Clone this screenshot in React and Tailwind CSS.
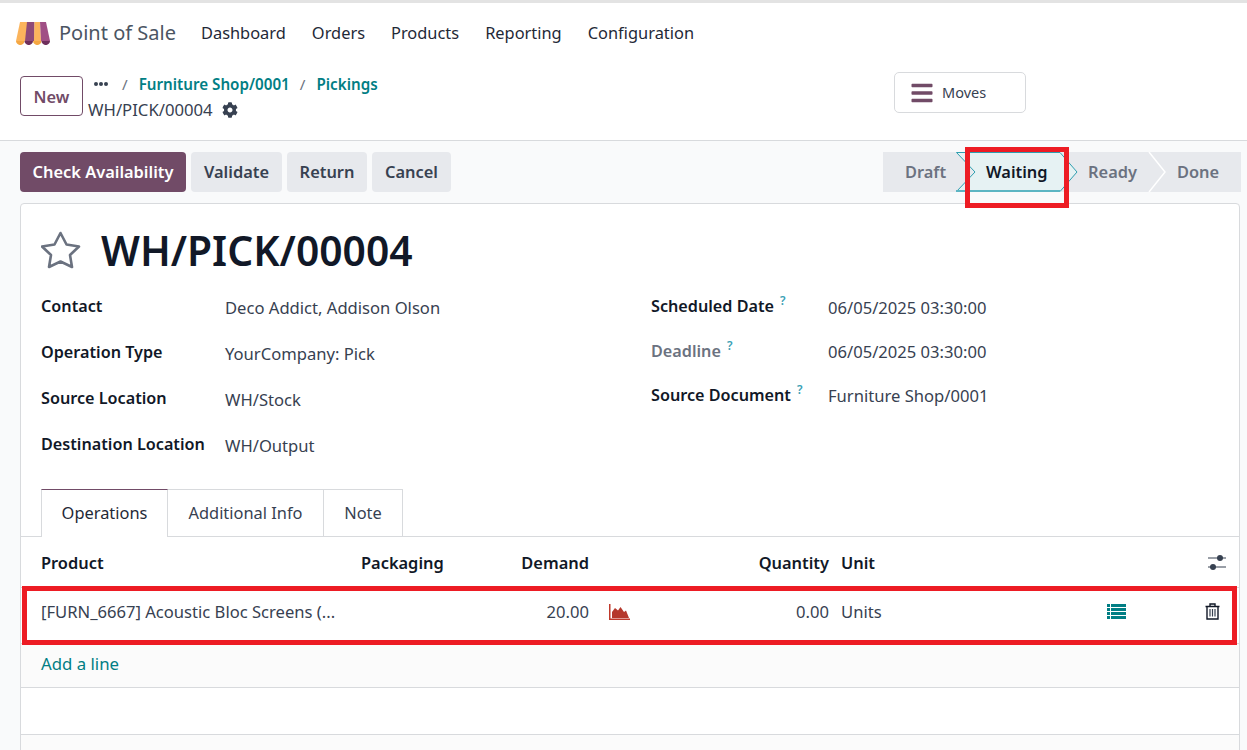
import React from "react";
import { FaCog, FaBars } from "react-icons/fa";

const navItems = ["Dashboard", "Orders", "Products", "Reporting", "Configuration"];

const Logo = () => (
  <svg width="34" height="24" viewBox="0 0 34 24" className="block">
    <path d="M4 1h7v19H0z" fill="#fbb45c" />
    <path d="M11 1h7.500v19H9z" fill="#8f4a78" />
    <path d="M18.500 1H24l1 19h-7z" fill="#fbb45c" />
    <path d="M24 1h6l4 19h-9z" fill="#a04f85" />
    <path d="M0 20h8.500a4.200 4 0 0 1-8.500 0z" fill="#f5a742" />
    <path d="M8.500 20H17a4.200 4 0 0 1-8.500 0z" fill="#6f2f5c" />
    <path d="M17 20h8.500a4.200 4 0 0 1-8.500 0z" fill="#f5a742" />
    <path d="M25.500 20H34a4.200 4 0 0 1-8.500 0z" fill="#6f2f5c" />
  </svg>
);

const StarIcon = () => (
  <svg width="40" height="38" viewBox="0 0 40 38" className="block">
    <path
      d="M19.500 2L25.500 13.500 38 15.500 29 24 31 36 19.500 30.500 8 36 10 24 1 15.500 13.500 13.500z"
      fill="none"
      stroke="#6b7280"
      strokeWidth="2.600"
      strokeLinejoin="round"
    />
  </svg>
);

const ListIcon = () => (
  <svg width="19" height="15" viewBox="0 0 19 15" className="ml-auto mr-[73px] block">
    {[0, 4, 8, 12].map((y) => (
      <g key={y} fill="#017e84">
        <rect x="0" y={y} width="3" height="3" />
        <rect x="4" y={y} width="15" height="3" />
      </g>
    ))}
  </svg>
);

const ChartIcon = () => (
  <svg width="21" height="16" viewBox="0 0 21 16" className="absolute left-[20px] top-[4px] block">
    <path d="M0.750 0v15.250H21" fill="none" stroke="#c0392b" strokeWidth="1.500" />
    <path d="M3 14V8l3-4 3 2.500L11.500 3 15 8l2-1.500 3 7.500z" fill="#b5382c" />
  </svg>
);

const TrashIcon = () => (
  <svg width="15" height="17" viewBox="0 0 15 17" className="ml-[6px] block">
    <path d="M0.500 3.500h14M5 3.500V1h5v2.500M2 3.500V16h11V3.500" fill="none" stroke="#111827" strokeWidth="1.400" />
    <path d="M5 6v7.500M7.500 6v7.500M10 6v7.500" fill="none" stroke="#374151" strokeWidth="1.200" />
  </svg>
);

const Field = ({ label, value, muted, help, tight, width = "w-[184px]" }) => (
  <div className="flex h-[46px] items-start">
    <div className={`${width} flex items-start text-[16.200px] font-semibold ${muted ? "text-[#6b7280]" : "text-[#111827]"}`}>
      {label}
      {help && <sup className="ml-[6px] mt-[7px] text-[12px] font-semibold leading-none text-[#3aa0b5]">?</sup>}
    </div>
    <div className={`${tight ? "pt-[1px]" : "pt-[2px]"} text-[16.600px] text-[#374151]`}>{value}</div>
  </div>
);

const StatusBar = () => (
  <div className="flex h-[40px] w-[358px] items-center bg-[#e7e9ed] text-[#6b7280] font-semibold">
    <div className="w-[78px] pl-[22px]">Draft</div>
    <div className="relative flex h-[40px] w-[106px] items-center pl-[25px] text-[#111827]">
      <svg width="122" height="40" viewBox="0 0 122 40" className="absolute left-[-5px] top-0">
        <path d="M0.500 0.500H104L121 20 104 39.500H0.500L19 20z" fill="#e6f2f3" stroke="#2f9fb0" />
        <path d="M0 39h104" stroke="#5cb5c3" strokeWidth="2" />
      </svg>
      <span className="relative">Waiting</span>
    </div>
    <div className="relative flex h-[40px] w-[82px] items-center pl-[21px]">
      Ready
      <svg width="18" height="40" viewBox="0 0 18 40" className="absolute right-[-17px] top-0">
        <path d="M1 0l16 20L1 40" fill="none" stroke="#ffffff" strokeWidth="1.500" />
      </svg>
    </div>
    <div className="flex-1 pl-[28px]">Done</div>
  </div>
);

const App = () => {
  return (
    <div className="relative h-[750px] w-[1247px] overflow-hidden bg-[#f9fafb] font-['Noto_Sans',sans-serif] text-[16.400px] leading-[24px] text-[#374151]">
      <div className="h-[3px] bg-[#e3e3e3]" />
      <nav className="flex h-[63px] items-center bg-white pl-[16px] pb-[3px]">
        <Logo />
        <span className="ml-[9px] text-[20px] text-[#4b5563]">Point of Sale</span>
        <div className="ml-[25px] flex gap-[26px] text-[#1f2937]">
          {navItems.map((item) => (
            <span key={item}>{item}</span>
          ))}
        </div>
      </nav>

      <div className="relative flex h-[75px] border-b border-[#d8dadd] bg-white pl-[20px] pt-[10px]">
        <button className="h-[40px] w-[63px] rounded-[4px] border border-[#714b67] pt-[1px] font-semibold text-[#714b67]">New</button>
        <div className="ml-[5px] -mt-[6px]">
          <div className="flex h-[28px] items-center text-[15.200px] font-semibold">
            <span className="ml-[6px] flex gap-[1px]">
              <i className="h-[4px] w-[4px] rounded-full bg-[#374151]" />
              <i className="h-[4px] w-[4px] rounded-full bg-[#374151]" />
              <i className="h-[4px] w-[4px] rounded-full bg-[#374151]" />
            </span>
            <span className="ml-[14px] font-normal text-[#6b7280]">/</span>
            <span className="ml-[11px] text-[#017e84]">Furniture Shop/0001</span>
            <span className="ml-[10px] font-normal text-[#6b7280]">/</span>
            <span className="ml-[11px] text-[#017e84]">Pickings</span>
          </div>
          <div className="flex items-center text-[16.700px]">
            <span>WH/PICK/00004</span>
            <FaCog className="ml-[9px] text-[16px] text-[#374151]" />
          </div>
        </div>
        <button className="absolute left-[894px] top-[6px] flex h-[41px] w-[132px] items-center rounded-[5px] border border-[#d8dadd] bg-white pl-[15px] text-[14.500px]">
          <FaBars className="text-[24px] text-[#714b67]" />
          <span className="ml-[8px] pb-[1px]">Moves</span>
        </button>
      </div>

      <div className="flex h-[62px] items-start justify-between pl-[20px] pr-[6px] pt-[11px]">
        <div className="flex gap-[5px] font-semibold">
          <button className="h-[40px] w-[166px] rounded-[4px] bg-[#714b67] text-white">Check Availability</button>
          <button className="h-[40px] w-[91px] rounded-[4px] bg-[#e7e9ed] text-[#374151]">Validate</button>
          <button className="h-[40px] w-[80px] rounded-[4px] bg-[#e7e9ed] text-[#374151]">Return</button>
          <button className="h-[40px] w-[79px] rounded-[4px] bg-[#e7e9ed] text-[#374151]">Cancel</button>
        </div>
        <StatusBar />
      </div>

      <div className="ml-[20px] h-[560px] w-[1220px] rounded-t-[4px] border border-[#d8dadd] bg-white">
        <div className="flex h-[89px] items-center pl-[20px] pt-[3px]">
          <StarIcon />
          <h1 className="ml-[20px] text-[40.800px] font-semibold leading-none text-[#111827]">WH/PICK/00004</h1>
        </div>
        <div className="flex pl-[20px] pt-[1px]">
          <div className="w-[610px]">
            <Field label="Contact" value="Deco Addict, Addison Olson" />
            <Field label="Operation Type" value="YourCompany: Pick" />
            <Field label="Source Location" value="WH/Stock" />
            <Field label="Destination Location" value="WH/Output" />
          </div>
          <div>
            <Field label="Scheduled Date" value="06/05/2025 03:30:00" help width="w-[177px]" />
            <div className="-mt-[1px]">
              <Field label="Deadline" value="06/05/2025 03:30:00" muted help tight width="w-[177px]" />
            </div>
            <div className="-mt-[2px]">
              <Field label="Source Document" value="Furniture Shop/0001" help tight width="w-[177px]" />
            </div>
          </div>
        </div>

        <div className="mt-[11px] flex h-[48px] border-b border-[#d8dadd] pl-[20px]">
          <div className="flex h-[48px] w-[127px] items-center justify-center border-x border-t border-[#d8dadd] border-t-[#714b67] bg-white pb-[1px] text-[#1f2937]">Operations</div>
          <div className="flex h-[47px] w-[156px] items-center justify-center border-r border-t border-[#d8dadd]">Additional Info</div>
          <div className="flex h-[47px] w-[79px] items-center justify-center border-r border-t border-[#d8dadd]">Note</div>
        </div>

        <div className="grid h-[50px] grid-cols-[320px_120px_108px_240px_1fr_40px] items-center pl-[20px] pt-[1px] font-semibold text-[#111827]">
          <span>Product</span>
          <span>Packaging</span>
          <span className="text-right">Demand</span>
          <span className="text-right">Quantity</span>
          <span className="pl-[12px]">Unit</span>
          <svg width="20" height="18" viewBox="0 0 20 18" className="ml-[8px]">
            <path d="M1 4h18M1 13h18" stroke="#374151" strokeWidth="1.200" />
            <circle cx="13" cy="4" r="3" fill="#374151" />
            <circle cx="6" cy="13" r="3" fill="#374151" />
          </svg>
        </div>
        <div className="grid h-[56px] grid-cols-[320px_120px_108px_240px_1fr_40px] items-center border-t border-[#d8dadd] pb-[8px] pl-[20px] text-[16.600px]">
          <span className="truncate">[FURN_6667] Acoustic Bloc Screens (...</span>
          <span />
          <span className="text-right">20.00</span>
          <span className="relative text-right">
            <ChartIcon />
            0.00
          </span>
          <span className="flex items-center pl-[12px]">
            Units
            <ListIcon />
          </span>
          <TrashIcon />
        </div>
        <div className="flex h-[44px] items-center border-t border-[#d8dadd] bg-[#fbfbfb] pb-[3px] pl-[20px] text-[16.800px] text-[#017e84]">Add a line</div>
        <div className="h-[48px] border-t border-b border-[#d8dadd] bg-white" />
        <div className="h-full bg-[#fbfbfb]" />
      </div>

      <div className="absolute left-[965px] top-[147px] h-[61px] w-[104px] border-[5px] border-[#ed1c24]" />
      <div className="absolute left-[22px] top-[586px] h-[59px] w-[1215px] border-[5px] border-[#ed1c24]" />
    </div>
  );
};

export default App;
